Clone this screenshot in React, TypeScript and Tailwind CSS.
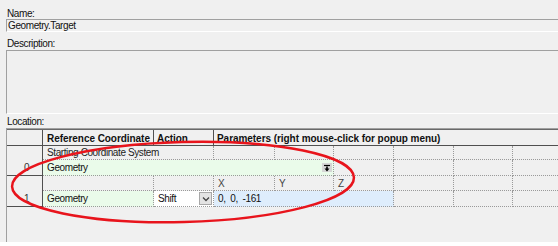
import React from "react";

const dash = "border-dotted border-[#9a9a9a]";

function Cell({
  className = "",
  children,
  last = false,
}: {
  className?: string;
  children?: React.ReactNode;
  last?: boolean;
}) {
  return (
    <div
      className={`${dash} border-b ${last ? "" : "border-r"} flex items-center pl-[4px] overflow-hidden whitespace-nowrap ${className}`}
    >
      {children}
    </div>
  );
}

function DropBtn() {
  return (
    <div className="ml-auto mr-[1px] w-[10px] h-[9px] bg-[#d6d6d6] flex items-center justify-center">
      <svg width="8" height="8" viewBox="0 0 8 8">
        <path d="M1 1.5H7" stroke="#000" strokeWidth="1.2" />
        <path d="M4 2.5V5" stroke="#000" strokeWidth="1.6" />
        <path d="M1.5 4.5H6.5L4 7.5Z" fill="#000" />
      </svg>
    </div>
  );
}

function ComboBtn() {
  return (
    <div className="ml-auto mr-[1px] w-[13px] h-[13px] bg-[#e3e3e3] border border-[#a8a8a8] flex items-center justify-center">
      <svg width="8" height="6" viewBox="0 0 8 6">
        <path d="M1 1.5L4 4.5L7 1.5" stroke="#444" strokeWidth="1.3" fill="none" />
      </svg>
    </div>
  );
}

export default function App() {
  return (
    <div className="relative w-[558px] h-[246px] bg-white overflow-hidden font-['Liberation_Sans',Arial,sans-serif] text-[10px] tracking-[-0.4px] text-[#111]">
      <div className="h-[242px] bg-[#f0f0f0] flex flex-col">
        <div className="h-[19px] pt-[8px] pl-[7px] leading-[11px]">Name:</div>
        <div className="ml-[6px] h-[13px] border-t border-t-[#a0a0a0] border-l border-l-[#a0a0a0] border-b border-b-white pl-[1px] leading-[11px]">
          Geometry.Target
        </div>
        <div className="h-[18px] pt-[6px] pl-[7px] leading-[11px]">Description:</div>
        <div className="ml-[6px] h-[64px] border-t border-t-[#a0a0a0] border-l border-l-[#a0a0a0] border-b border-b-white" />
        <div className="h-[14px] pt-[2px] pl-[7px] leading-[11px]">Location:</div>
        <div className="ml-[6px] flex-1 border-t border-t-[#a0a0a0] border-l border-l-[#a0a0a0]">
          <div className="border-t border-t-[#696969] grid grid-cols-[36px_111px_60px_61px_59px_60px_60px_59px_1fr] grid-rows-[16px_14px_16px_15px_16px] leading-[11px]">
            {/* header */}
            <div className="border-r border-b border-[#505050]" />
            <div className="border-r border-b border-[#505050] font-bold tracking-[-0.05px] pl-[4px] pt-[3px] overflow-hidden whitespace-nowrap">
              Reference Coordinate
            </div>
            <div className="border-r border-b border-[#505050] font-bold tracking-[-0.05px] pl-[3px] pt-[3px]">Action</div>
            <div className="col-span-6 border-b border-[#505050] font-bold tracking-[-0.05px] pl-[3px] pt-[3px] whitespace-nowrap">
              Parameters (right mouse-click for popup menu)
            </div>

            {/* row 0 */}
            <div className="row-span-2 border-r border-b border-[#505050] flex items-end justify-center pl-[4px] pb-[2px] text-[#333]">
              0
            </div>
            <Cell className="col-span-2 text-[#222]">Starting Coordinate System</Cell>
            <Cell />
            <Cell />
            <Cell />
            <Cell />
            <Cell />
            <Cell last />

            <Cell className="col-span-4 bg-[#eafbea]">
              Geometry
              <DropBtn />
            </Cell>
            <Cell />
            <Cell />
            <Cell />
            <Cell last />

            {/* row 1 */}
            <div className="row-span-2 border-r border-b border-[#505050] flex items-end justify-center pl-[4px] pb-[2px] text-[#333]">
              1
            </div>
            <Cell />
            <Cell />
            <Cell className="text-[#444]">X</Cell>
            <Cell className="text-[#444]">Y</Cell>
            <Cell className="text-[#444]">Z</Cell>
            <Cell />
            <Cell />
            <Cell last />

            <Cell className="bg-[#eafbea]">Geometry</Cell>
            <Cell className="bg-white pr-0">
              Shift
              <ComboBtn />
            </Cell>
            <Cell className="col-span-3 bg-[#deedfc]">0,&nbsp; 0,&nbsp; -161</Cell>
            <Cell />
            <Cell />
            <Cell last />
          </div>
        </div>
      </div>
      <svg
        className="absolute left-0 top-0 pointer-events-none"
        width="558"
        height="246"
        viewBox="0 0 558 246"
      >
        <ellipse
          cx="183"
          cy="182"
          rx="171"
          ry="40"
          fill="none"
          stroke="#e8141c"
          strokeWidth="2.5"
          transform="rotate(-1.5 183 182)"
        />
      </svg>
    </div>
  );
}
